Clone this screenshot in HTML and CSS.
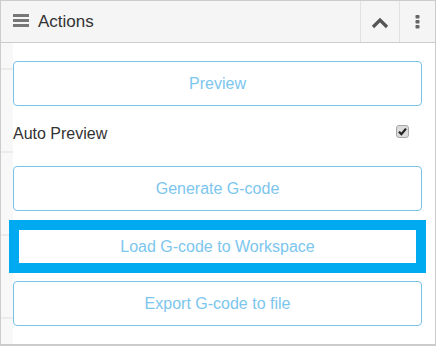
FILE: index.html
```html
<!DOCTYPE html>
<html lang="en">
  <head>
    <meta charset="UTF-8" />
    <title>Actions</title>
    <link rel="stylesheet" href="styles.css">
  </head>
  <body>
    <div class="panel">
      <div class="panel-header">
        <span class="menu-icon">
          <svg width="16" height="13" viewBox="0 0 16 13">
            <rect x="0" y="0" width="16" height="3" fill="#777" />
            <rect x="0" y="5" width="16" height="3" fill="#777" />
            <rect x="0" y="10" width="16" height="3" fill="#777" />
          </svg>
        </span>
        <span class="panel-title">Actions</span>
        <button class="tool-btn collapse">
          <svg width="18" height="12" viewBox="0 0 18 12">
            <path d="M2 10 L9 3 L16 10" fill="none" stroke="#555" stroke-width="3.2" />
          </svg>
        </button>
        <button class="tool-btn more">
          <svg width="5" height="14" viewBox="0 0 5 14">
            <rect x="0.5" y="0" width="4" height="3.5" rx="0.8" fill="#666" />
            <rect x="0.5" y="5" width="4" height="3.5" rx="0.8" fill="#666" />
            <rect x="0.5" y="10" width="4" height="3.5" rx="0.8" fill="#666" />
          </svg>
        </button>
      </div>

      <div class="panel-body">
        <div class="gutter">
          <div class="gutter-row"></div>
          <div class="gutter-row"></div>
          <div class="gutter-row"></div>
          <div class="gutter-row"></div>
        </div>

        <div class="actions">
          <button class="action-btn">Preview</button>

          <label class="option-row">
            <span>Auto Preview</span>
            <span class="check">
              <svg width="13" height="13" viewBox="0 0 13 13">
                <rect x="0.5" y="0.5" width="12" height="12" rx="2.5" fill="#dcdcdc" stroke="#a8a8a8" />
                <path d="M3 6.8 L5.4 9.2 L10 3.6" fill="none" stroke="#222" stroke-width="2.2" />
              </svg>
            </span>
          </label>

          <button class="action-btn">Generate G-code</button>

          <div class="highlight">
            <button class="action-btn">Load G-code to Workspace</button>
          </div>

          <button class="action-btn">Export G-code to file</button>
        </div>
      </div>
    </div>
  </body>
</html>
```

FILE: styles.css
```css
body {
  margin: 0;
  font-family: "Liberation Sans", Arial, sans-serif;
  color: #333;
  background: #fff;
}

.panel {
  width: 436px;
  height: 346px;
  box-sizing: border-box;
  border: 1px solid #ccc;
  border-bottom-width: 2px;
  overflow: hidden;
}

.panel-header {
  display: flex;
  align-items: center;
  height: 41px;
  background: #f5f5f5;
  border-bottom: 1px solid #ccc;
}

.menu-icon {
  display: flex;
  margin-left: 12px;
  margin-top: -2px;
}

.panel-title {
  flex: 1;
  margin-left: 9px;
  font-size: 17px;
  color: #333;
}

.tool-btn {
  display: flex;
  align-items: center;
  justify-content: center;
  height: 41px;
  padding: 0;
  border: none;
  border-left: 1px solid #e2e2e2;
  background: transparent;
}

.collapse {
  width: 39px;
  padding-top: 2px;
}

.more {
  width: 36px;
  margin-right: 0;
}

.panel-body {
  display: flex;
}

.gutter {
  width: 12px;
  height: 303px;
  padding-top: 25px;
  box-sizing: border-box;
  background: #f8f8f8;
}

.gutter-row {
  height: 83px;
  box-sizing: border-box;
  border-top: 2px solid #ececec;
}

.actions {
  flex: 1;
  display: flex;
  flex-direction: column;
  padding: 18px 13px 0 0;
}

.action-btn {
  height: 45px;
  padding: 0;
  font-family: "Liberation Sans", Arial, sans-serif;
  font-size: 16px;
  color: #7cc6ee;
  background: #fff;
  border: 1px solid #79c2e8;
  border-radius: 4px;
}

.option-row {
  display: flex;
  align-items: flex-start;
  justify-content: space-between;
  height: 20px;
  margin: 18px 0 22px;
  font-size: 16px;
  line-height: 20px;
  color: #333;
}

.check {
  display: flex;
  margin-top: 1px;
  margin-right: 13px;
}

.highlight {
  display: flex;
  flex-direction: column;
  margin: 9px -4px 8px;
  border: 10px solid #00aaf0;
}

.highlight .action-btn {
  height: 33px;
  border: none;
  border-radius: 0;
}
```
